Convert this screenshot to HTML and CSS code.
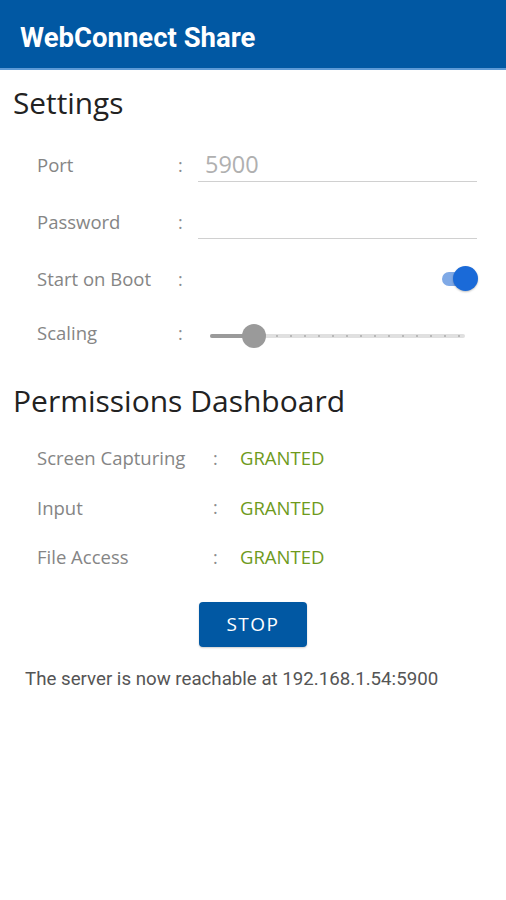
FILE: index.html
```html
<!DOCTYPE html>
<html>
<head>
<meta charset="utf-8">
<link rel="stylesheet" href="styles.css">
</head>
<body>
<header class="appbar"><span class="title">WebConnect Share</span></header>
<main class="content">
  <h2 class="section">Settings</h2>
  <div class="settings">
    <div class="row"><span class="label">Port</span><span class="colon">:</span><div class="field"><span class="value">5900</span></div></div>
    <div class="row"><span class="label">Password</span><span class="colon">:</span><div class="field"></div></div>
    <div class="row"><span class="label">Start on Boot</span><span class="colon">:</span><div class="toggle-cell"><div class="toggle"><span class="track"></span><span class="knob"></span></div></div></div>
    <div class="row last"><span class="label">Scaling</span><span class="colon">:</span><div class="slider-cell"><div class="slider"><span class="ticks"></span><span class="fill"></span><span class="thumb"></span></div></div></div>
  </div>
  <h2 class="section perm-title">Permissions Dashboard</h2>
  <div class="perms">
    <div class="prow"><span class="plabel">Screen Capturing</span><span class="pcolon">:</span><span class="granted">GRANTED</span></div>
    <div class="prow"><span class="plabel">Input</span><span class="pcolon">:</span><span class="granted">GRANTED</span></div>
    <div class="prow"><span class="plabel">File Access</span><span class="pcolon">:</span><span class="granted">GRANTED</span></div>
  </div>
  <div class="btn-wrap"><button class="stop">STOP</button></div>
  <p class="status">The server is now reachable at 192.168.1.54:5900</p>
</main>
</body>
</html>
```
FILE: styles.css
```css
* { box-sizing: border-box; }
html, body { margin: 0; padding: 0; background: #fff; }
body { width: 506px; height: 900px; font-family: "Open Sans", sans-serif; }
.appbar {
  height: 70px;
  background: #0158a3;
  border-bottom: 2px solid #5d9ad6;
  display: flex;
  align-items: center;
  padding-left: 20px;
  padding-top: 6px;
}
.title { font-family: Roboto, sans-serif; font-weight: 700; font-size: 27.5px; color: #fff; }
.content { padding: 0 0 0 13px; }
.section { margin: 0; font-weight: 400; font-size: 29.8px; color: #222; line-height: 36px; padding-top: 15px; }
.settings { padding-left: 24px; margin-top: 15px; display: flex; flex-direction: column; }
.row { display: grid; grid-template-columns: 141px 20px 1fr; align-items: center; height: 57px; }
.row.last { height: 51px; }
.label, .plabel { font-size: 18.5px; color: #858585; }
.colon, .pcolon { font-size: 18px; color: #8c8c8c; }
.field { width: 279px; height: 34px; border-bottom: 1.5px solid #d0d0d0; display: flex; align-items: center; padding-left: 7px; }
.value { font-size: 23.5px; color: #b0b0b0; }
.toggle-cell { display: flex; justify-content: flex-end; padding-right: 28px; }
.toggle { position: relative; width: 38px; height: 26px; }
.track { position: absolute; left: 2px; top: 6px; width: 32px; height: 14px; border-radius: 7px; background: #7fa9e6; }
.knob { position: absolute; right: 0; top: 0; width: 25px; height: 25px; border-radius: 50%; background: #1a6ad8; box-shadow: 0 1px 2px rgba(0,0,0,0.25); }
.slider-cell { padding-left: 12px; padding-top: 6px; }
.slider { position: relative; width: 255px; height: 26px; }
.ticks { position: absolute; left: 0; right: 0; top: 11px; height: 4px; background-color: #e0e0e0; background-image: radial-gradient(circle, #b8b8b8 1px, transparent 1.5px); background-size: 14px 4px; background-position: 4px 0; border-radius: 2px; }
.fill { position: absolute; left: 0; top: 11px; width: 46px; height: 4px; border-radius: 2px; background: #9a9a9a; }
.thumb { position: absolute; left: 32px; top: 1px; width: 24px; height: 24px; border-radius: 50%; background: #9a9a9a; }
.perm-title { padding-top: 25px; font-size: 30px; }
.perms { padding-left: 24px; margin-top: 14px; display: flex; flex-direction: column; }
.prow { display: grid; grid-template-columns: 176px 27px 1fr; align-items: center; height: 49.5px; }
.granted { font-size: 18.5px; color: #6e9a1c; }
.btn-wrap { display: flex; padding-left: 186px; margin-top: 20px; }
.stop {
  width: 108px; height: 45px; border: none; border-radius: 4px;
  background: #0158a3; color: #fff; font-family: "Open Sans", sans-serif;
  font-size: 19px; letter-spacing: 1.5px; box-shadow: 0 1px 2px rgba(0,0,0,0.2);
}
.status { margin: 21px 0 0 12px; font-family: Roboto, sans-serif; font-size: 18.7px; color: #555; }
```
